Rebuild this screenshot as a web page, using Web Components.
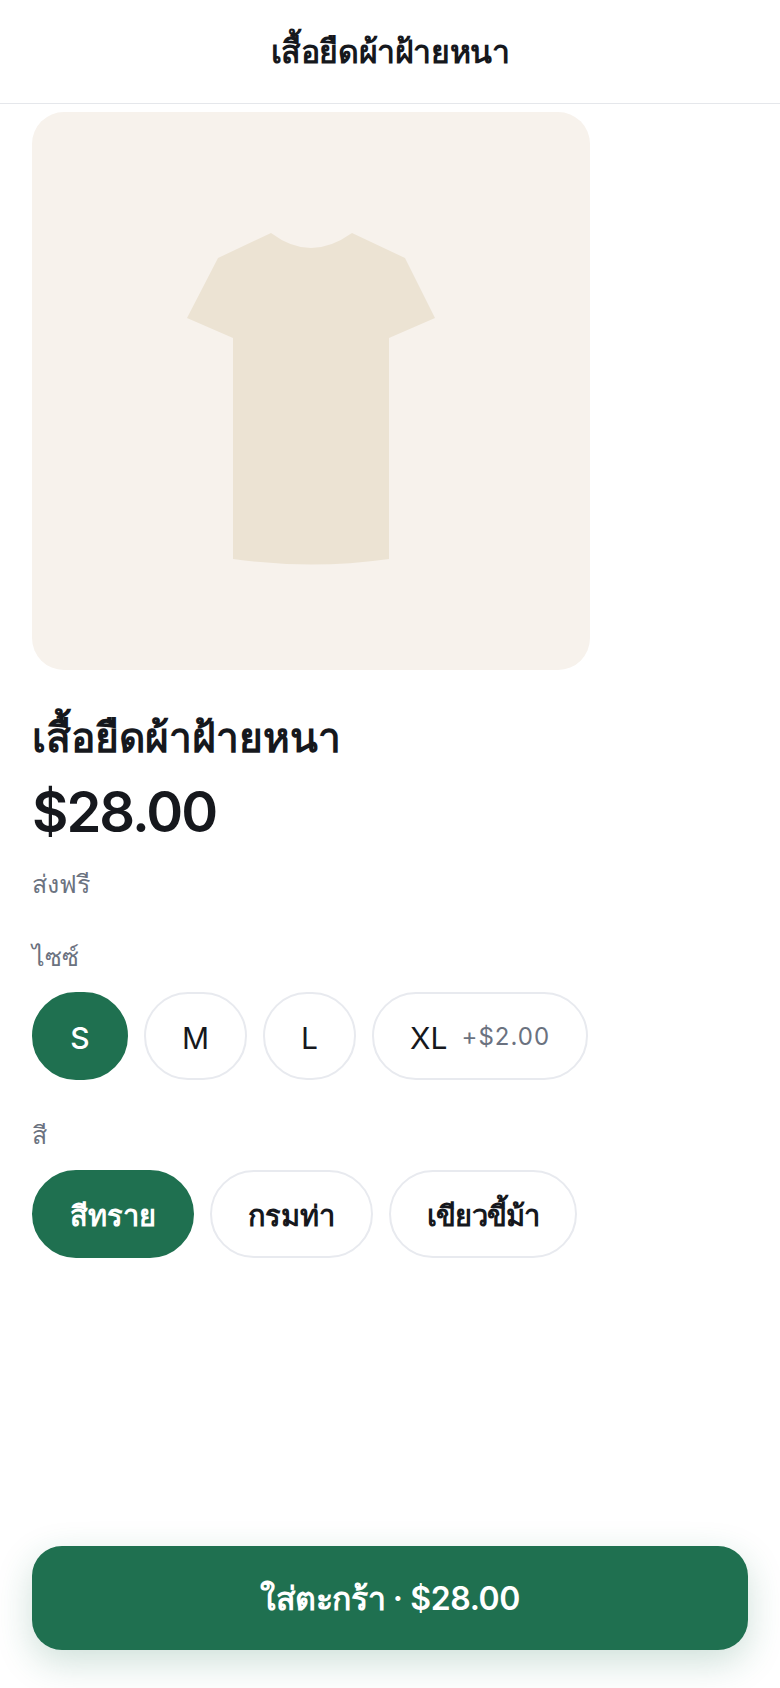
<!doctype html>
<html lang="th">
<head>
<meta charset="utf-8">
<title>เสื้อยืดผ้าฝ้ายหนา</title>
<style>
html, body { margin: 0; height: 100%; background: #fff; }
body {
	font-family: Inter, "Noto Sans", sans-serif;
	color: #16181d;
	display: flex;
	flex-direction: column;
	height: 1688px;
	overflow: hidden;
}
</style>
</head>
<body>
<app-bar>เสื้อยืดผ้าฝ้ายหนา</app-bar>
<product-view>
	<span slot="title">เสื้อยืดผ้าฝ้ายหนา</span>
	<span slot="price">$28.00</span>
	<span slot="note">ส่งฟรี</span>
	<option-group label="ไซซ์">
		<option-pill selected style="min-width: 96px; justify-content: center">S</option-pill>
		<option-pill>M</option-pill>
		<option-pill>L</option-pill>
		<option-pill extra="+$2.00">XL</option-pill>
	</option-group>
	<option-group label="สี">
		<option-pill selected thai>สีทราย</option-pill>
		<option-pill thai>กรมท่า</option-pill>
		<option-pill thai style="letter-spacing: -.8px">เขียวขี้ม้า</option-pill>
	</option-group>
</product-view>
<cart-bar>ใส่ตะกร้า · $28.00</cart-bar>

<script>
class AppBar extends HTMLElement {
	constructor() {
		super();
		this.attachShadow({ mode: 'open' }).innerHTML = `
			<style>
			:host {
				display: flex;
				align-items: center;
				justify-content: center;
				height: 103px;
				border-bottom: 1px solid #e5e7eb;
				font-size: 32px;
				font-weight: 600;
				letter-spacing: -0.4px;
			}
			</style>
			<slot></slot>`;
	}
}

class ShirtImage extends HTMLElement {
	constructor() {
		super();
		this.attachShadow({ mode: 'open' }).innerHTML = `
			<style>
			:host {
				display: block;
				width: 558px;
				height: 558px;
				border-radius: 32px;
				background: #f7f2ec;
			}
			svg { display: block; width: 558px; height: 558px; }
			</style>
			<svg viewBox="32 112 558 558" aria-hidden="true">
				<path fill="#ece3d3" d="M271 233 Q291 248 311 248 Q331 248 352 233 L405 258 L435 318 L389 338 L389 559 Q311 570 233 559 L233 338 L187 318 L218 258 Z"/>
			</svg>`;
	}
}

class ProductView extends HTMLElement {
	constructor() {
		super();
		this.attachShadow({ mode: 'open' }).innerHTML = `
			<style>
			:host {
				display: flex;
				flex-direction: column;
				flex: 1;
				padding: 8px 32px 0;
			}
			.title { font-size: 40.7px; font-weight: 600; margin-top: 38px; line-height: 60px; }
			.price { font-size: 56px; font-weight: 600; line-height: 70px; margin-top: 9px; letter-spacing: -2px; }
			.note { font-size: 25px; color: #6b7280; line-height: 35px; margin-top: 20px; }
			</style>
			<shirt-image></shirt-image>
			<div class="title"><slot name="title"></slot></div>
			<div class="price"><slot name="price"></slot></div>
			<div class="note"><slot name="note"></slot></div>
			<slot></slot>`;
	}
}

class OptionGroup extends HTMLElement {
	constructor() {
		super();
		this.attachShadow({ mode: 'open' }).innerHTML = `
			<style>
			:host { display: block; margin-top: 35px; }
			.label { font-size: 25px; color: #6b7280; line-height: 40px; margin-bottom: 15px; }
			.row { display: flex; gap: 16px; }
			</style>
			<div class="label"></div>
			<div class="row"><slot></slot></div>`;
		this.shadowRoot.querySelector('.label').textContent = this.getAttribute('label');
	}
}

class OptionPill extends HTMLElement {
	constructor() {
		super();
		this.attachShadow({ mode: 'open' }).innerHTML = `
			<style>
			:host {
				display: inline-flex;
				align-items: center;
				gap: 14px;
				box-sizing: border-box;
				height: 88px;
				padding: 0 36px;
				border: 2px solid #e8eaef;
				border-radius: 44px;
				font-size: 30px;
				font-weight: 400;
				color: #16181d;
				background: #fff;
			}
			:host([selected]) { background: #1f7050; border-color: #1f7050; color: #fff; font-weight: 500; }
			:host([thai]) { font-weight: 600; font-size: 29px; letter-spacing: -.1px; }
			.text { padding-top: 3px; }
			.extra { font-size: 24px; font-weight: 400; color: #6b7280; letter-spacing: 1px; }
			</style>
			<span class="text"><slot></slot></span>
			<span class="extra"></span>`;
		const extra = this.shadowRoot.querySelector('.extra');
		if (this.hasAttribute('extra')) extra.textContent = this.getAttribute('extra');
		else extra.remove();
	}
}

class CartBar extends HTMLElement {
	constructor() {
		super();
		this.attachShadow({ mode: 'open' }).innerHTML = `
			<style>
			:host { display: block; padding: 0 32px 38px; }
			.btn {
				display: flex;
				align-items: center;
				justify-content: center;
				height: 104px;
				border-radius: 30px;
				background: #1f7050;
				color: #fff;
				font-size: 32px;
				font-weight: 600;
				letter-spacing: -0.4px;
				box-shadow: 0 12px 36px rgba(31, 112, 80, .22);
			}
			</style>
			<div class="btn"><slot></slot></div>`;
	}
}

customElements.define('app-bar', AppBar);
customElements.define('shirt-image', ShirtImage);
customElements.define('product-view', ProductView);
customElements.define('option-group', OptionGroup);
customElements.define('option-pill', OptionPill);
customElements.define('cart-bar', CartBar);
</script>
</body>
</html>
